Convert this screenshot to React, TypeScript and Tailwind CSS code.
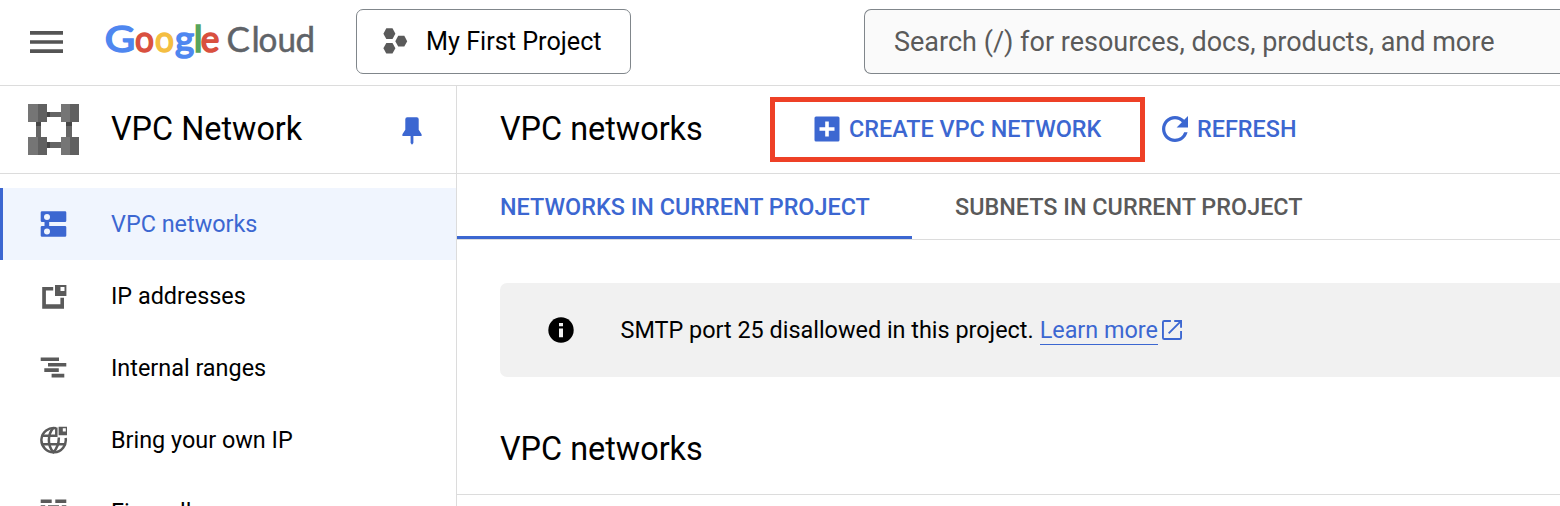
import type { ReactNode } from 'react';

const google: [string, number, number, string][] = [
  ['G', 104.7, 1.11, '#4f87f0'],
  ['o', 135, 0.89, '#d9503f'],
  ['o', 155, 0.89, '#f4be42'],
  ['g', 175, 0.98, '#4f87f0'],
  ['l', 193.7, 1, '#58a55c'],
  ['e', 200.8, 0.94, '#d9503f'],
];

const cloud: [string, number, number][] = [
  ['C', 226.5, 1],
  ['l', 251.5, 1],
  ['o', 258.5, 0.95],
  ['u', 277.5, 0.95],
  ['d', 295.5, 1],
];

function Logo() {
  return (
    <svg width="230" height="84" viewBox="92 0 230 84" aria-label="Google Cloud" className="-ml-[10px] shrink-0 font-['Lato',sans-serif]">
      {google.map(([c, x, s, fill], i) => (
        <text key={i} transform={`translate(${x} 51.600) scale(${s} 1)`} fontSize="37.5" fontWeight="400" fill={fill} stroke={fill} strokeWidth="1.7">{c}</text>
      ))}
      {cloud.map(([c, x, s], i) => (
        <text key={i} transform={`translate(${x} 52) scale(${s} 1)`} fontSize="35" fontWeight="400" fill="#5f6368" stroke="#5f6368" strokeWidth="0.5">{c}</text>
      ))}
    </svg>
  );
}

function ProjectIcon() {
  return (
    <svg width="26" height="28" viewBox="0 0 26 28" fill="#5a5a5a">
      <path d="M3.300 0.300h6.200l2.900 5.400-2.900 5.200H3.300L.4 5.700z" />
      <path d="M3.300 15h6.200l2.900 5.300-2.900 5.300H3.300L.4 20.300z" />
      <path d="M15.200 7.700h6.100l2.900 5.500-2.900 5.300h-6.100l-2.900-5.300z" />
    </svg>
  );
}

function ProductIcon() {
  return (
    <svg width="51" height="51" viewBox="0 0 51 51" shapeRendering="crispEdges">
      <path fill="#656565" d="M18 8h15v5H18zM18 38h15v6H18zM8 18h5v15H8zM38 18h6v15h-6z" />
      <path fill="#454545" d="M18 8h4v5h-4zM18 38h4v6h-4zM8 18h5v4H8zM38 18h6v4h-6z" />
      <path fill="#757575" d="M0 0h10v18H0zM33 0h9v18h-9zM0 33h10v18H0zM33 33h9v18h-9z" />
      <path fill="#606060" d="M10 0h9v18h-9zM42 0h9v18h-9zM10 33h9v18h-9zM42 33h9v18h-9z" />
    </svg>
  );
}

function PinIcon() {
  return (
    <svg width="20" height="28" viewBox="0 0 20 28" fill="#3c67d1">
      <path d="M5.300.3h9.400q2 0 2 2v10.500l2.900 4.400v1.900h-8.200v7L10 27.700l-1.400-1.600v-7H.4v-1.900l2.900-4.400V2.300q0-2 2-2z" />
    </svg>
  );
}

function NetworksIcon() {
  return (
    <svg width="28" height="28" viewBox="0 0 28 28">
      <path fill="#3c67d1" d="M2 1.200h23q1.300 0 1.300 1.300v8.200q0 1.300-1.300 1.300H9.200v4H25q1.300 0 1.300 1.300v8.200q0 1.300-1.300 1.300H2q-1.300 0-1.300-1.300v-8.200Q.7 16 2 16h2.500v-4H2Q.7 12 .7 10.700V2.500Q.7 1.200 2 1.200z" />
      <circle cx="7" cy="7" r="3" fill="#f0f5fe" />
      <circle cx="7" cy="21.400" r="3" fill="#f0f5fe" />
    </svg>
  );
}

function AddressesIcon() {
  return (
    <svg width="28" height="28" viewBox="0 0 28 28" fill="#5a5a5a">
      <path d="M2.200 5h11v3.500H5.900v13.700h14.500v-6.400H24v11H2.200V5z" />
      <path fillRule="evenodd" d="M15 3h11.400v11H15zM20.500 5v4h4V5z" />
    </svg>
  );
}

function RangesIcon() {
  return (
    <svg width="28" height="28" viewBox="0 0 28 28" fill="#5a5a5a">
      <path d="M.7 3.400H19V7H.7zM8 8.900h18.300v3.500H8zM4.300 14.300h14.500v3.600H4.300zM11.600 19.800H24.300v3.600H11.600z" />
    </svg>
  );
}

function GlobeIcon() {
  return (
    <svg width="28" height="28" viewBox="0 0 28 28" fill="none" stroke="#5a5a5a" strokeWidth="2.500">
      <path d="M16 2.200A12.200 12.200 0 1 0 25.600 12" />
      <path d="M13.300 1.800C7.400 8.500 7.400 19.500 13.300 26.200C17 22.500 19 18.500 18.800 11.500" />
      <path d="M1.800 9.800h14.500V1.500M1.800 18.300h23.400" />
      <path fill="#5a5a5a" stroke="none" fillRule="evenodd" d="M18.600.7H27V9.200h-8.400zM22.800 2.200v3.400h3V2.200z" />
    </svg>
  );
}

function FirewallIcon() {
  return (
    <svg width="28" height="28" viewBox="0 0 28 28" fill="#5a5a5a">
      <path d="M.7 1.600h11v3.500H.7zM15.300 1.600h11v3.500h-11zM.7 7.300h4.500v3.600H.7zM8 7.300h11v3.600H8zM21.800 7.300h4.500v3.600h-4.500zM.7 12.800h11v3.500H.7zM15.300 12.800h11v3.500h-11z" />
    </svg>
  );
}

function NavItem({ icon, active, children }: { icon: ReactNode; active?: boolean; children: ReactNode }) {
  return (
    <a
      className={
        active
          ? 'flex h-[72px] shrink-0 items-center border-l-[3px] border-[#3c67d1] bg-[#f0f5fe] pl-[37px] text-[#3c67d1]'
          : 'flex h-[72px] shrink-0 items-center pl-10 text-black'
      }
    >
      <span className="w-[71px] shrink-0">{icon}</span>
      <span className="pt-[2px] text-[23.4px] whitespace-nowrap">{children}</span>
    </a>
  );
}

export default function App() {
  return (
    <div className="flex h-[506px] w-[1560px] flex-col overflow-hidden bg-white font-['Roboto',sans-serif] text-black">
      <header className="flex h-[86px] shrink-0 items-start border-b border-[#dcdcdc]">
        <div className="flex h-[83px] w-[102px] shrink-0 items-center pl-[30px]">
          <svg width="33" height="22" viewBox="0 0 33 22" fill="#545454">
            <path d="M0 0h33v3.700H0zM0 9.200h33v3.600H0zM0 18.200h33v3.700H0z" />
          </svg>
        </div>
        <div className="flex h-[84px] w-[254px] shrink-0 items-center"><Logo /></div>
        <button className="mt-[9px] flex h-[65px] w-[275px] shrink-0 items-center rounded-[7px] border border-[#80868b] pl-[26px]">
          <ProjectIcon />
          <span className="ml-[17px] pt-px text-[25.2px] whitespace-nowrap">My First Project</span>
        </button>
        <div className="mt-[9px] ml-[233px] flex h-[65px] flex-1 items-center rounded-l-[7px] border border-r-0 border-[#80868b] bg-[#fafafa] pt-px pl-[29px] text-[27px] whitespace-nowrap text-[#5a5a5a]">
          Search (/) for resources, docs, products, and more
        </div>
      </header>

      <div className="flex min-h-0 flex-1">
        <aside className="flex w-[457px] shrink-0 flex-col overflow-hidden border-r border-[#dcdcdc]">
          <div className="flex h-[88px] shrink-0 items-center border-b border-[#dcdcdc] pl-7">
            <ProductIcon />
            <h1 className="ml-8 flex-1 text-[32.4px] whitespace-nowrap">VPC Network</h1>
            <div className="mt-[3px] mr-[34px]"><PinIcon /></div>
          </div>
          <nav className="mt-[14px] flex flex-col">
            <NavItem active icon={<NetworksIcon />}>VPC networks</NavItem>
            <NavItem icon={<AddressesIcon />}>IP addresses</NavItem>
            <NavItem icon={<RangesIcon />}>Internal ranges</NavItem>
            <NavItem icon={<GlobeIcon />}>Bring your own IP</NavItem>
            <NavItem icon={<FirewallIcon />}>Firewall</NavItem>
          </nav>
        </aside>

        <main className="flex min-w-0 flex-1 flex-col overflow-hidden">
          <div className="flex h-[88px] shrink-0 items-center border-b border-[#dcdcdc] pl-[43px]">
            <h2 className="w-[270px] shrink-0 text-[32.4px] whitespace-nowrap">VPC networks</h2>
            <button className="flex h-[65px] w-[375px] shrink-0 items-center border-[5px] border-[#ee4026] pl-[39px] text-[#3c67d1]">
              <svg width="26" height="26" viewBox="0 0 26 26" className="-mt-px">
                <rect x="0.500" y="0.500" width="25" height="25" rx="1.500" fill="#3c67d1" />
                <path d="M11.200 5.500h3.600v5.700h5.700v3.600h-5.700v5.700h-3.600v-5.700H5.500v-3.600h5.700z" fill="#fff" />
              </svg>
              <span className="ml-[9px] text-[23.4px] font-medium whitespace-nowrap">CREATE VPC NETWORK</span>
            </button>
            <button className="ml-[17px] flex items-center text-[#3c67d1]">
              <svg width="26" height="26" viewBox="4 4 16 16" fill="currentColor">
                <path d="M17.650 6.350A7.958 7.958 0 0 0 12 4c-4.420 0-7.990 3.580-7.990 8s3.570 8 7.990 8c3.730 0 6.840-2.550 7.730-6h-2.080A5.990 5.990 0 0 1 12 18c-3.310 0-6-2.690-6-6s2.690-6 6-6c1.660 0 3.140.69 4.220 1.780L13 11h7V4l-2.350 2.350z" />
              </svg>
              <span className="ml-[9px] text-[23.4px] font-medium whitespace-nowrap">REFRESH</span>
            </button>
          </div>

          <div className="flex h-[66px] shrink-0 border-b border-[#dcdcdc] text-[23.4px] font-medium whitespace-nowrap">
            <div className="flex h-[65px] w-[455px] items-center border-b-[3px] border-[#3c67d1] pt-[5px] pl-[43px] text-[#3c67d1]">NETWORKS IN CURRENT PROJECT</div>
            <div className="flex h-[65px] items-center pt-[2px] pl-[43px] text-[#5a5a5a]">SUBNETS IN CURRENT PROJECT</div>
          </div>

          <div className="mt-[43px] ml-[43px] flex h-[94px] shrink-0 items-center rounded-l-[7px] bg-[#f1f1f1] pl-12 text-[23.4px] whitespace-nowrap">
            <svg width="26" height="26" viewBox="0 0 26 26" className="mr-[46.5px] shrink-0">
              <circle cx="13" cy="13" r="12.700" fill="#000" />
              <path fill="#f1f1f1" d="M11 6h4v3.300h-4zM11 11.500h4v8.800h-4z" />
            </svg>
            <span className="pt-px">SMTP port 25 disallowed in this project.</span>
            <a className="ml-[6px] border-b border-[#3c67d1] leading-[28px] text-[#3c67d1]">Learn more</a>
            <svg width="20" height="20" viewBox="3 3 18 18" fill="#3c67d1" className="ml-1 shrink-0">
              <path d="M19.300 19.300H4.700V4.700H11V3H5a2 2 0 0 0-2 2v14a2 2 0 0 0 2 2h14a2 2 0 0 0 2-2v-6h-1.700zM14 3v1.700h4.100l-9.700 9.700 1.200 1.200 9.700-9.700V10H21V3z" />
            </svg>
          </div>

          <div className="flex h-[118px] shrink-0 items-center border-b border-[#dcdcdc] pt-[28px] pl-[43px]">
            <h2 className="text-[32.4px] whitespace-nowrap">VPC networks</h2>
          </div>
        </main>
      </div>
    </div>
  );
}
